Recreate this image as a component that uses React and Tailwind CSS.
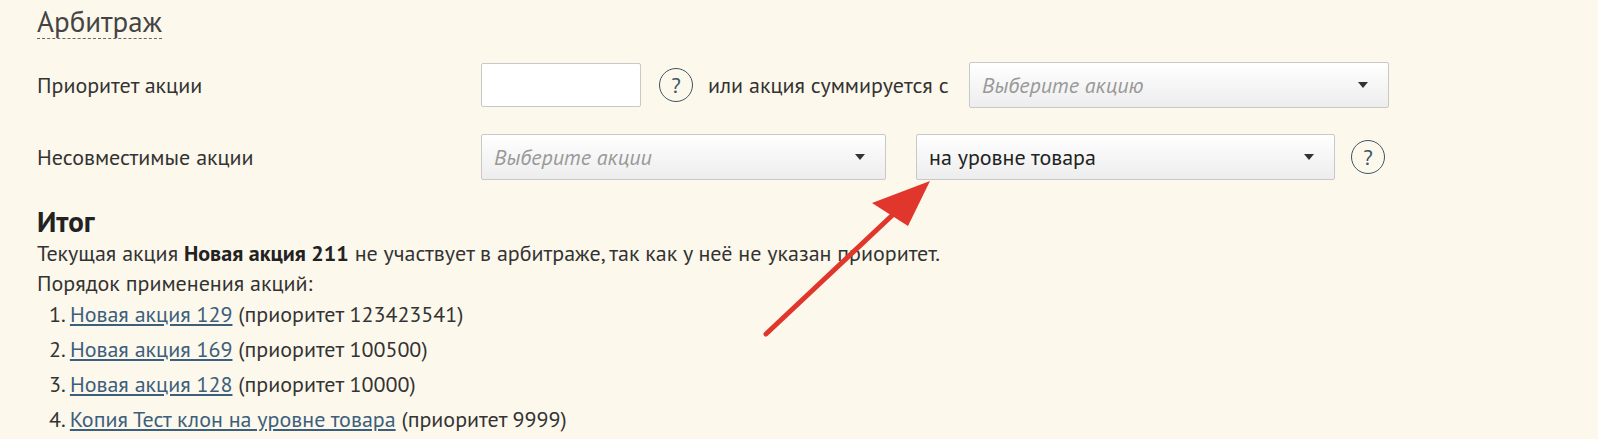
export default function App(){
const f={fontFamily:'"PT Sans","Noto Sans","Liberation Sans",sans-serif'};
const Q=()=>(<div className="w-[34px] h-[34px] rounded-full border-[1.5px] border-[#3d5566] flex items-center justify-center text-[22px] text-[#3d5566] shrink-0">?</div>);
const Caret=()=>(<svg width="10" height="6" viewBox="0 0 10 6"><path d="M0 0h10L5 6z" fill="#333"/></svg>);
const Sel=({w,children,ph})=>(<div className={`${w} h-[46px] border border-[#c8c8c8] rounded-[2px] bg-gradient-to-b from-white to-[#ededed] flex items-center justify-between pl-3 pr-5 shrink-0`}><span className={ph?"italic text-[#999] text-[22px]":"text-[#222] text-[22px]"}>{children}</span><Caret/></div>);
return(<div style={f} className="relative w-[1598px] h-[439px] overflow-hidden bg-[#fdf8ec] text-[#333] pl-[37px] pt-[4px]">
<div className="text-[29px] text-[#444] inline-block border-b border-dashed border-[#666] leading-[34px]">Арбитраж</div>
<div className="flex items-center mt-[23px] h-[46px]">
<div className="w-[444px] text-[22px]">Приоритет акции</div>
<div className="w-[160px] h-[44px] bg-white border border-[#c8c8c8] rounded-[2px]"></div>
<div className="ml-[18px]"><Q/></div>
<div className="ml-[15px] text-[22px] w-[261px] whitespace-nowrap">или акция суммируется с</div>
<Sel w="w-[420px]" ph>Выберите акцию</Sel>
</div>
<div className="flex items-center mt-[26px] h-[46px]">
<div className="w-[444px] text-[22px]">Несовместимые акции</div>
<Sel w="w-[405px]" ph>Выберите акции</Sel>
<div className="w-[30px]"></div>
<Sel w="w-[419px]">на уровне товара</Sel>
<div className="ml-[16px]"><Q/></div>
</div>
<div className="text-[29px] font-bold text-[#222] mt-[24px] leading-[34px]">Итог</div>
<div className="text-[22px] leading-[30px] text-[#333]">Текущая акция <b className="text-[#222]">Новая акция 211</b> не участвует в арбитраже, так как у неё не указан приоритет.</div>
<div className="text-[22px] leading-[30px] text-[#333]">Порядок применения акций:</div>
<ol className="text-[22px] leading-[35px] pl-[12px] -mt-[1px]">
{[["Новая акция 129","123423541"],["Новая акция 169","100500"],["Новая акция 128","10000"]].map(([a,b],i)=>(<li key={i}>{i+1}. <span className="underline text-[#3b5f7d]">{a}</span> (приоритет {b})</li>))}
<li>4. <span className="underline text-[#3b5f7d]">Копия Тест клон на уровне товара</span> (приоритет 9999)</li>
</ol>
<svg className="absolute left-0 top-0 pointer-events-none" width="1598" height="439"><line x1="766" y1="334" x2="900" y2="208" stroke="#e0362c" strokeWidth="5" strokeLinecap="round"/><polygon points="930,181 872,203 908,226" fill="#e0362c"/></svg>
</div>);}
